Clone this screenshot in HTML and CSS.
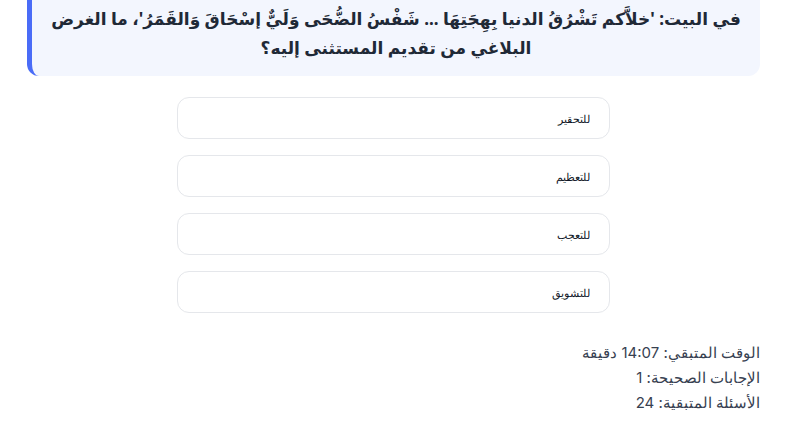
FILE: index.html
```html
<!DOCTYPE html>
<html lang="ar" dir="rtl">
<head>
<meta charset="utf-8">
<link rel="stylesheet" href="styles.css">
</head>
<body>
<main class="page">
  <section class="question">
    <p>في البيت: 'خلاَّكم تَشْرُقُ الدنيا بِهِجَتِهَا ... شَفْسُ الضُّحَى وَلَيٌّ إسْحَاقَ وَالقَمَرُ'، ما الغرض البلاغي من تقديم المستثنى إليه؟</p>
  </section>
  <div class="options">
    <button class="option">للتحقير</button>
    <button class="option">للتعظيم</button>
    <button class="option">للتعجب</button>
    <button class="option">للتشويق</button>
  </div>
  <div class="stats">
    <p>الوقت المتبقي: 14:07 دقيقة</p>
    <p>الإجابات الصحيحة: 1</p>
    <p>الأسئلة المتبقية: 24</p>
  </div>
</main>
</body>
</html>
```
FILE: styles.css
```css
* { box-sizing: border-box; }
html, body { margin: 0; padding: 0; background: #ffffff; }
body { font-family: "Noto Sans", "DejaVu Sans", sans-serif; color: #1f2937; }
.page {
  width: 733px;
  margin: -14px 40px 0 27px;
}
.question {
  background: #f3f6fe;
  border-left: 5px solid #4a6cf7;
  border-radius: 12px;
  padding: 18px 16px 14px;
}
.question p {
  margin: 0;
  text-align: center;
  font-size: 17px;
  font-weight: 700;
  line-height: 29px;
  color: #1f2937;
}
.options {
  display: flex;
  flex-direction: column;
  gap: 16px;
  width: 433px;
  margin: 21px auto 0;
}
.option {
  height: 42px;
  background: #fff;
  border: 1px solid #e5e7eb;
  border-radius: 12px;
  text-align: right;
  padding: 0 19px;
  font-family: "Noto Sans", sans-serif;
  font-size: 11px;
  color: #111827;
}
.stats {
  margin-top: 27px;
  font-family: "Inter", "Noto Sans", sans-serif;
}
.stats p {
  margin: 0;
  font-size: 15px;
  line-height: 25px;
  color: #374151;
}
```
